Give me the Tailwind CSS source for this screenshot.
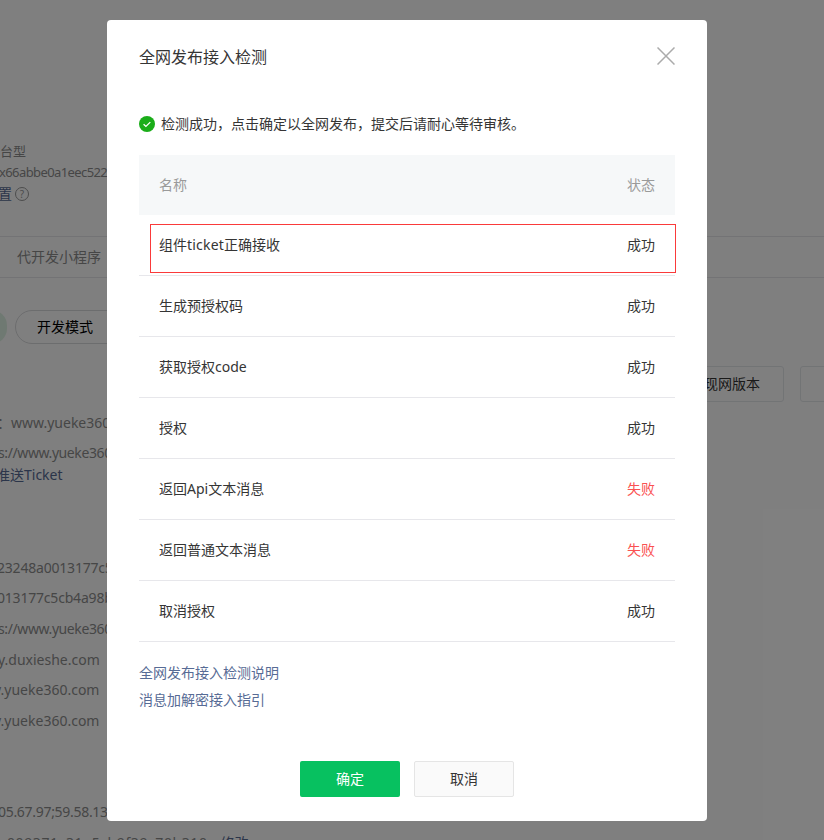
<!DOCTYPE html>
<html lang="zh">
<head>
<meta charset="UTF-8">
<title>全网发布接入检测</title>
<script src="https://cdn.jsdelivr.net/npm/@tailwindcss/browser@4"></script>
</head>
<body class="bg-white">
<div class="relative w-[824px] h-[840px] overflow-hidden font-['Noto_Sans','Noto_Sans_CJK_SC',sans-serif] text-sm text-[#353535]">

  <!-- page behind the mask -->
  <div class="w-[824px] h-[840px] overflow-hidden pt-[141px] leading-[20px]">
    <div class="w-[300px] whitespace-nowrap text-[13px] text-[#8d8d8d]">
      <div class="h-[20px]">台型</div>
      <div class="mt-[1px] h-[20px] -ml-[1px] tracking-[-0.6px]">x66abbe0a1eec5228f</div>
      <div class="mt-[2px] h-[20px] flex items-center gap-[3px] -ml-[2px]">
        <span class="text-sm text-[#576b95]">置</span>
        <span class="w-[14px] h-[14px] rounded-full border border-[#999] text-[10px] leading-[12px] text-center text-[#999]">?</span>
      </div>
    </div>
    <div class="mt-[32px] h-[42px] border-y border-[#e7e7eb] flex items-center pl-[17px] text-[#8d8d8d]">代开发小程序</div>
    <div class="mt-[32px] h-[34px] flex items-center gap-[8px] -ml-[24px]">
      <span class="w-[31px] h-[34px] rounded-full bg-[#dff3e4]"></span>
      <span class="w-[110px] h-[34px] rounded-full border border-[#d9dadc] flex items-center pl-[21px] text-black">开发模式</span>
    </div>
    <div class="mt-[22px] h-[36px] flex justify-end gap-[16px] -mr-[16px]">
      <span class="w-[92px] h-[36px] rounded-[3px] border border-[#e4e8eb] flex items-center justify-end pr-[23px]">现网版本</span>
      <span class="w-[40px] h-[36px] rounded-[3px] border border-[#e4e8eb]"></span>
    </div>
    <div class="whitespace-nowrap text-[#8d8d8d] w-[300px]">
      <div class="mt-[11px] -ml-[3px]">：www.yueke360.com</div>
      <div class="mt-[10px] -ml-[2px] tracking-[-0.4px]">s://www.yueke360.com</div>
      <div class="mt-[2px] -ml-[4px] text-[#576b95]">准送Ticket</div>
      <div class="mt-[73px] -ml-[3px] tracking-[-0.2px]">23248a0013177c5cb4a98</div>
      <div class="mt-[10px] -ml-[3px] tracking-[-0.2px]">013177c5cb4a98b</div>
      <div class="mt-[11px] -ml-[2px] tracking-[-0.4px]">s://www.yueke360.com</div>
      <div class="mt-[11px] -ml-[2px]">y.duxieshe.com</div>
      <div class="mt-[10px] -ml-[6px]">y.yueke360.com</div>
      <div class="mt-[11px] -ml-[6px]">y.yueke360.com</div>
      <div class="mt-[71px] -ml-[2px] tracking-[-0.3px]">05.67.97;59.58.130</div>
      <div class="mt-[11px] pl-[7px] flex gap-[13px] tracking-[0.6px]">009371c31a5cb9f39c70b310 <span class="text-[#576b95] tracking-normal">修改</span></div>
    </div>
  </div>

  <!-- mask -->
  <div class="absolute inset-0 bg-black/50"></div>

  <!-- dialog -->
  <div class="absolute left-[107px] top-[20px] w-[600px] h-[801px] bg-white rounded-[4px] px-[32px]">
    <div class="h-[74px] flex items-center justify-between">
      <h2 class="text-base font-normal mt-[-1px] text-[#353535]">全网发布接入检测</h2>
      <svg class="-mt-[2px]" width="18" height="18" viewBox="0 0 18 18" fill="none" stroke="#ababab" stroke-width="1.5"><path d="M0.5 0.5l17 17M17.5 0.5l-17 17"/></svg>
    </div>
    <div class="mt-[19px] h-[22px] flex items-center gap-[6px]">
      <svg width="16" height="16" viewBox="0 0 16 16"><circle cx="8" cy="8" r="8" fill="#1aad19"/><path d="M4.6 8.2l2.3 2.2 4.4-4.3" fill="none" stroke="#fff" stroke-width="1.3"/></svg>
      <span>检测成功，点击确定以全网发布，提交后请耐心等待审核。</span>
    </div>
    <div class="mt-[20px] h-[60px] bg-[#f6f8f9] flex items-center justify-between px-[20px] text-[#9a9a9a]">
      <span>名称</span><span>状态</span>
    </div>
    <div class="relative h-[61px] border-b border-[#e7e7eb] flex items-center justify-between px-[20px]">
      <span>组件<span class="tracking-[0.2px]">ticket</span>正确接收</span><span>成功</span>
      <div class="absolute left-[11px] -right-[1px] top-[9px] h-[49px] border border-[#fa3a3a]"></div>
    </div>
    <div class="h-[61px] border-b border-[#e7e7eb] flex items-center justify-between px-[20px]"><span>生成预授权码</span><span>成功</span></div>
    <div class="h-[61px] border-b border-[#e7e7eb] flex items-center justify-between px-[20px]"><span>获取授权code</span><span>成功</span></div>
    <div class="h-[61px] border-b border-[#e7e7eb] flex items-center justify-between px-[20px]"><span>授权</span><span>成功</span></div>
    <div class="h-[61px] border-b border-[#e7e7eb] flex items-center justify-between px-[20px]"><span>返回Api文本消息</span><span class="text-[#fa5151]">失败</span></div>
    <div class="h-[61px] border-b border-[#e7e7eb] flex items-center justify-between px-[20px]"><span>返回普通文本消息</span><span class="text-[#fa5151]">失败</span></div>
    <div class="h-[61px] border-b border-[#e7e7eb] flex items-center justify-between px-[20px]"><span>取消授权</span><span>成功</span></div>
    <div class="mt-[17px] leading-[27px] text-[#576b95]">
      <a href="#" class="block">全网发布接入检测说明</a>
      <a href="#" class="block">消息加解密接入指引</a>
    </div>
    <div class="mt-[48px] flex justify-center gap-[14px]">
      <button class="w-[100px] h-[36px] rounded-[2px] bg-[#07c160] text-white">确定</button>
      <button class="w-[100px] h-[36px] rounded-[2px] bg-[#fafafa] border border-[#e5e5e5] text-[#353535]">取消</button>
    </div>
  </div>
</div>
</body>
</html>
